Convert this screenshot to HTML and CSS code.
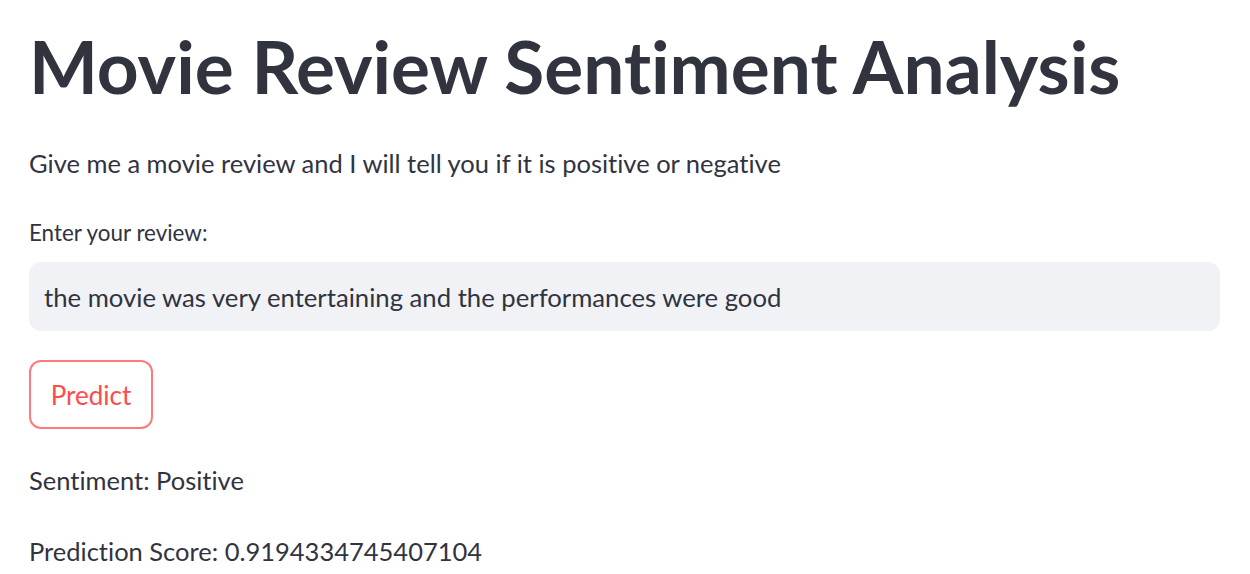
FILE: index.html
```html
<!DOCTYPE html>
<html>
<head>
<meta charset="utf-8">
<link rel="stylesheet" href="styles.css">
</head>
<body>
<main class="app">
  <h1 class="title">Movie Review Sentiment Analysis</h1>
  <p class="intro">Give me a movie review and I will tell you if it is positive or negative</p>
  <div class="field">
    <label class="label" for="review">Enter your review:</label>
    <div class="input-box"><input id="review" class="input" type="text" value="the movie was very entertaining and the performances were good"></div>
  </div>
  <div class="actions"><button class="btn" type="button">Predict</button></div>
  <p class="result">Sentiment: Positive</p>
  <p class="result">Prediction Score: 0.9194334745407104</p>
</main>
</body>
</html>
```

FILE: styles.css
```css
html, body {
  margin: 0;
  padding: 0;
  background: #ffffff;
}
body {
  font-family: Lato, "Liberation Sans", sans-serif;
  font-variant-ligatures: none;
  color: #31333f;
}
.app {
  width: 1191px;
  padding: 0 0 0 29px;
  display: flex;
  flex-direction: column;
}
.title {
  margin: 0;
  padding-top: 24px;
  font-size: 73px;
  line-height: 84px;
  font-weight: 700;
  letter-spacing: 0;
  color: #31333f;
}
.intro {
  margin: 35px 0 0;
  font-size: 25.5px;
  line-height: 40px;
}
.field {
  margin-top: 35px;
  display: flex;
  flex-direction: column;
}
.label {
  font-size: 22.4px;
  line-height: 30px;
  margin-bottom: 14px;
}
.input-box {
  height: 69px;
  background: #f0f2f6;
  border-radius: 12px;
  display: flex;
  align-items: center;
}
.input {
  border: 0;
  outline: none;
  background: transparent;
  font-family: inherit;
  font-variant-ligatures: none;
  font-size: 25.7px;
  color: #31333f;
  padding: 0 15px;
  width: 100%;
}
.actions {
  margin-top: 29px;
}
.btn {
  height: 69px;
  width: 124px;
  padding: 0;
  border: 2px solid #ff7b7b;
  border-radius: 12px;
  background: #ffffff;
  color: #ff4b4b;
  font-family: inherit;
  font-size: 26px;
}
.result {
  margin: 0;
  margin-top: 31px;
  font-size: 25.5px;
  line-height: 40px;
}
.result + .result {
  margin-top: 31px;
}
```
